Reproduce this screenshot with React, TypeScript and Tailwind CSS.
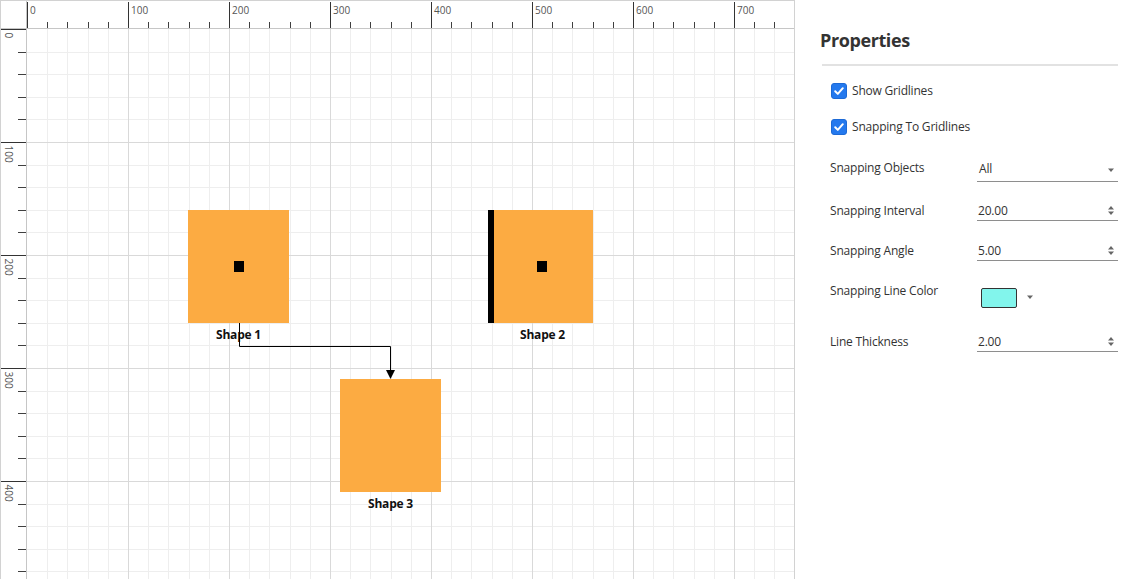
import React from 'react';

const SX = 1.01;
const SY = 1.13;
const CW = 767;
const CH = 550;

function TopRuler() {
  const els: React.ReactNode[] = [];
  for (let u = 0; u <= 760; u += 20) {
    const x = Math.round(u * SX) + 0.5;
    if (u % 100 === 0) {
      els.push(<line key={`m${u}`} x1={x} x2={x} y1={1} y2={27} stroke="#333" strokeWidth={1} />);
      els.push(
        <text key={`t${u}`} x={x + 2.5} y={12.5} fontSize={10} fill="#555" fontFamily="Open Sans, sans-serif">
          {u}
        </text>
      );
    } else {
      els.push(<line key={`n${u}`} x1={x} x2={x} y1={20.5} y2={27} stroke="#3f3f3f" strokeWidth={1} />);
    }
  }
  return (
    <svg width={CW} height={27} className="block" shapeRendering="crispEdges">
      {els}
    </svg>
  );
}

function LeftRuler() {
  const els: React.ReactNode[] = [];
  for (let u = 0; u <= 480; u += 20) {
    const y = Math.round(u * SY) + 0.5;
    if (u % 100 === 0) {
      els.push(<line key={`m${u}`} x1={0} x2={25} y1={y} y2={y} stroke="#333" strokeWidth={1} />);
      els.push(
        <text
          key={`t${u}`}
          x={4}
          y={y + 3}
          transform={`rotate(90 4 ${y + 3})`}
          fontSize={10}
          fill="#555"
          fontFamily="Open Sans, sans-serif"
        >
          {u}
        </text>
      );
    } else {
      els.push(<line key={`n${u}`} x1={17} x2={25} y1={y} y2={y} stroke="#3f3f3f" strokeWidth={1} />);
    }
  }
  return (
    <svg width={25} height={CH} className="block" shapeRendering="crispEdges">
      {els}
    </svg>
  );
}

function Grid() {
  const minor: React.ReactNode[] = [];
  const major: React.ReactNode[] = [];
  for (let k = 1; k * 20.2 < CW; k++) {
    const x = Math.round(k * 20.2) + 0.5;
    const el = <line key={`v${k}`} x1={x} x2={x} y1={0} y2={CH} stroke={k % 5 === 0 ? '#d9d9d9' : '#eeeeee'} />;
    (k % 5 === 0 ? major : minor).push(el);
  }
  for (let k = 1; k * 22.6 < CH; k++) {
    const y = Math.round(k * 22.6) + 0.5;
    const el = <line key={`h${k}`} x1={0} x2={CW} y1={y} y2={y} stroke={k % 5 === 0 ? '#d9d9d9' : '#eeeeee'} />;
    (k % 5 === 0 ? major : minor).push(el);
  }
  return (
    <svg width={CW} height={CH} className="absolute left-0 top-0" shapeRendering="crispEdges">
      {minor}
      {major}
    </svg>
  );
}

function Connector() {
  return (
    <svg width={CW} height={CH} className="absolute left-0 top-0">
      <polyline points="212.5,294 212.5,317.5 363.5,317.5 363.5,342" fill="none" stroke="#000" strokeWidth={1} />
      <polygon points="359,341 368,341 363.5,350" fill="#000" />
    </svg>
  );
}

function Check() {
  return (
    <div className="w-[16px] h-[16px] rounded-[3px] bg-[#2479ee] border border-[#1d6ad6] flex items-center justify-center shrink-0">
      <svg width="12" height="12" viewBox="0 0 12 12">
        <path d="M2.2 6.3 L4.8 8.9 L9.8 3.2" fill="none" stroke="#fff" strokeWidth="2" strokeLinecap="round" strokeLinejoin="round" />
      </svg>
    </div>
  );
}

function Caret() {
  return (
    <svg width="8" height="5" viewBox="0 0 8 5" className="block">
      <path d="M1 0.5 L7 0.5 L4 4 Z" fill="#666" />
    </svg>
  );
}

function Spin() {
  return (
    <svg width="8" height="11" viewBox="0 0 8 11" className="block">
      <path d="M1 4.5 L4 1 L7 4.5 Z M1 6.5 L4 10 L7 6.5 Z" fill="#666" />
    </svg>
  );
}

function NumRow({ label, value, mt }: { label: string; value: string; mt: string }) {
  return (
    <div className={`${mt} ml-[10px] flex h-[24px]`}>
      <div className="w-[147px] pt-[4px] leading-[20px]">{label}</div>
      <div className="w-[141px] h-[24px] border-b border-[#8e8e8e] flex justify-between pl-[1px] pr-[3px] pt-[4px]">
        <span className="leading-[20px]">{value}</span>
        <div className="mt-[4px]">
          <Spin />
        </div>
      </div>
    </div>
  );
}

export default function App() {
  return (
    <div className="w-[1144px] h-[579px] flex bg-white overflow-hidden font-['Open_Sans',sans-serif] text-[#333]">
      <div className="w-[795px] h-[579px] shrink-0 border border-b-0 border-[#d2d2d2] flex flex-col">
        <div className="flex h-[28px] shrink-0 border-b border-[#c6c6c6]">
          <div className="w-[26px] shrink-0 border-r border-[#c6c6c6]" />
          <TopRuler />
        </div>
        <div className="flex flex-1 min-h-0">
          <div className="w-[26px] shrink-0 border-r border-[#c6c6c6]">
            <LeftRuler />
          </div>
          <div className="relative w-[767px] h-[550px] overflow-hidden">
            <Grid />
            {/* Shape 1 */}
            <div className="absolute left-[161px] top-[181px] w-[101px] h-[113px] bg-[#fcab42]" />
            <div className="absolute left-[207px] top-[232px] w-[10px] h-[11px] bg-black" />
            <div className="absolute left-[161px] top-[298px] w-[101px] text-center text-[12px] leading-[16px] font-bold tracking-[-0.2px] text-[#111]">
              Shape 1
            </div>
            {/* Shape 2 */}
            <div className="absolute left-[465px] top-[181px] w-[101px] h-[113px] bg-[#fcab42]" />
            <div className="absolute left-[461px] top-[181px] w-[6px] h-[113px] bg-black" />
            <div className="absolute left-[510px] top-[232px] w-[10px] h-[11px] bg-black" />
            <div className="absolute left-[465px] top-[298px] w-[101px] text-center text-[12px] leading-[16px] font-bold tracking-[-0.2px] text-[#111]">
              Shape 2
            </div>
            {/* Shape 3 */}
            <div className="absolute left-[313px] top-[350px] w-[101px] h-[113px] bg-[#fcab42]" />
            <div className="absolute left-[313px] top-[467px] w-[101px] text-center text-[12px] leading-[16px] font-bold tracking-[-0.2px] text-[#111]">
              Shape 3
            </div>
            <Connector />
          </div>
        </div>
      </div>

      <div className="flex-1 flex flex-col pl-[25px] pr-[26px] text-[12px] tracking-[-0.2px]">
        <div className="mt-[26px] text-[18px] leading-[28px] font-bold tracking-[-0.4px] text-[#333]">Properties</div>
        <div className="mt-[10px] ml-[2px] h-[2px] bg-[#e2e2e2]" />

        <div className="mt-[17px] ml-[11px] flex items-center h-[16px] gap-[5px]">
          <Check />
          <span className="leading-[16px]">Show Gridlines</span>
        </div>
        <div className="mt-[20px] ml-[11px] flex items-center h-[16px] gap-[5px]">
          <Check />
          <span className="leading-[16px]">Snapping To Gridlines</span>
        </div>

        <div className="mt-[23px] ml-[10px] flex h-[24px]">
          <div className="w-[147px] leading-[20px]">Snapping Objects</div>
          <div className="w-[141px] h-[24px] border-b border-[#8e8e8e] flex justify-between pl-[2px] pr-[3px] pt-[1px]">
            <span className="leading-[20px]">All</span>
            <div className="mt-[9px]">
              <Caret />
            </div>
          </div>
        </div>

        <NumRow label="Snapping Interval" value="20.00" mt="mt-[15px]" />
        <NumRow label="Snapping Angle" value="5.00" mt="mt-[16px]" />

        <div className="mt-[19px] ml-[10px] flex h-[28px]">
          <div className="w-[147px] pt-[1px] leading-[20px]">Snapping Line Color</div>
          <div className="flex items-start pt-[8px]">
            <div className="ml-[4px] w-[36px] h-[20px] rounded-[2px] border border-[#333] bg-[#82f5ec]" />
            <div className="ml-[9px] mt-[7px]">
              <Caret />
            </div>
          </div>
        </div>

        <NumRow label="Line Thickness" value="2.00" mt="mt-[20px]" />
      </div>
    </div>
  );
}
